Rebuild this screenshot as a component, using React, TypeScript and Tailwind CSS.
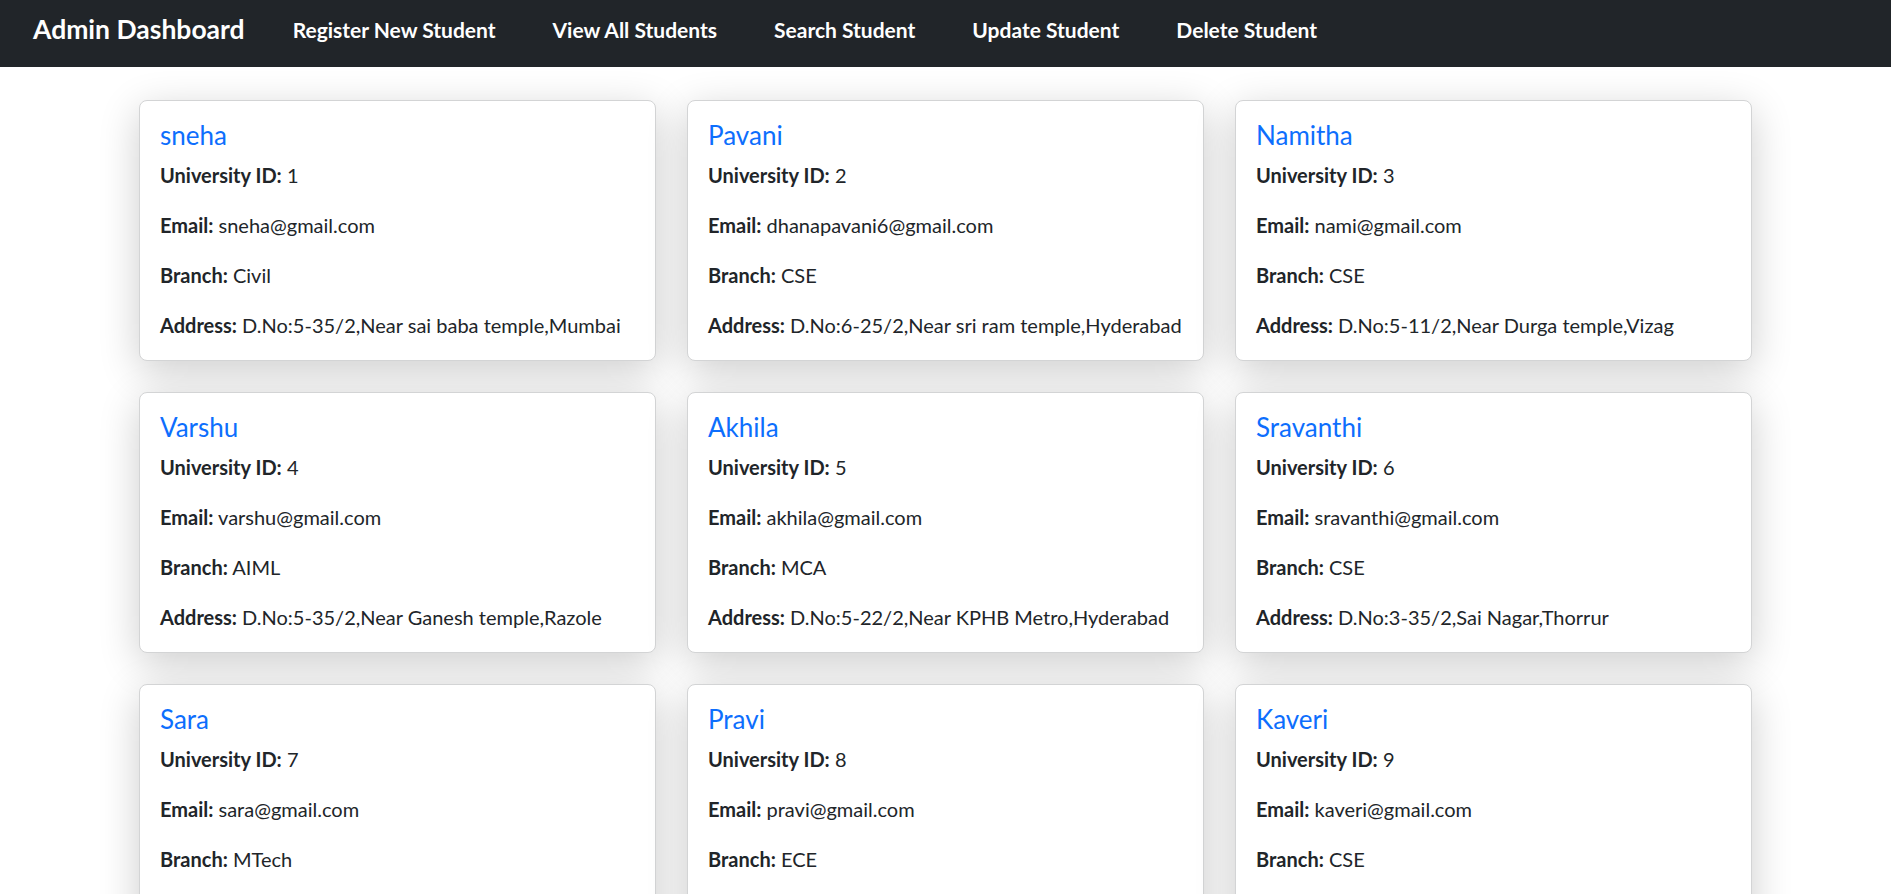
import React from 'react'

type Student = {
  id: number
  name: string
  email: string
  branch: string
  address: string
}

const students: Student[] = [
  { id: 1, name: 'sneha', email: 'sneha@gmail.com', branch: 'Civil', address: 'D.No:5-35/2,Near sai baba temple,Mumbai' },
  { id: 2, name: 'Pavani', email: 'dhanapavani6@gmail.com', branch: 'CSE', address: 'D.No:6-25/2,Near sri ram temple,Hyderabad' },
  { id: 3, name: 'Namitha', email: 'nami@gmail.com', branch: 'CSE', address: 'D.No:5-11/2,Near Durga temple,Vizag' },
  { id: 4, name: 'Varshu', email: 'varshu@gmail.com', branch: 'AIML', address: 'D.No:5-35/2,Near Ganesh temple,Razole' },
  { id: 5, name: 'Akhila', email: 'akhila@gmail.com', branch: 'MCA', address: 'D.No:5-22/2,Near KPHB Metro,Hyderabad' },
  { id: 6, name: 'Sravanthi', email: 'sravanthi@gmail.com', branch: 'CSE', address: 'D.No:3-35/2,Sai Nagar,Thorrur' },
  { id: 7, name: 'Sara', email: 'sara@gmail.com', branch: 'MTech', address: 'D.No:2-15/2,Near bus stand,Warangal' },
  { id: 8, name: 'Pravi', email: 'pravi@gmail.com', branch: 'ECE', address: 'D.No:4-12/2,Near Ram temple,Guntur' },
  { id: 9, name: 'Kaveri', email: 'kaveri@gmail.com', branch: 'CSE', address: 'D.No:7-21/2,Near Beach road,Vizag' },
]

const navLinks = ['Register New Student', 'View All Students', 'Search Student', 'Update Student', 'Delete Student']

function StudentCard({ s }: { s: Student }) {
  return (
    <div className="rounded-lg border border-[#d3d4d5] bg-white p-5 shadow-[0_10px_40px_rgba(0,0,0,0.2)]">
      <h5 className="mb-[10px] text-[26px] leading-[29px] text-[#0d6efd]">{s.name}</h5>
      <p className="mb-5 whitespace-nowrap leading-[30px]">
        <strong className="font-bold">University ID:</strong> {s.id}
      </p>
      <p className="mb-5 whitespace-nowrap leading-[30px]">
        <strong className="font-bold">Email:</strong> {s.email}
      </p>
      <p className="mb-5 whitespace-nowrap leading-[30px]">
        <strong className="font-bold">Branch:</strong> {s.branch}
      </p>
      <p className="whitespace-nowrap leading-[30px]">
        <strong className="font-bold">Address:</strong> {s.address}
      </p>
    </div>
  )
}

export default function App() {
  return (
    <div className="h-[894px] overflow-hidden bg-white font-['Lato',sans-serif] text-[20px] text-[#212529]">
      <nav className="flex h-[67px] items-center bg-[#212529] pb-[7px] pl-[33px]">
        <span className="mr-[48px] text-[26.5px] font-bold text-white">Admin Dashboard</span>
        <div className="flex items-center gap-[57px]">
          {navLinks.map((l) => (
            <a key={l} href="#" className="text-[21px] font-bold text-white">
              {l}
            </a>
          ))}
        </div>
      </nav>
      <main className="mx-auto mt-[33px] grid w-[1613px] grid-cols-3 gap-[31px]">
        {students.map((s) => (
          <StudentCard key={s.id} s={s} />
        ))}
      </main>
    </div>
  )
}
